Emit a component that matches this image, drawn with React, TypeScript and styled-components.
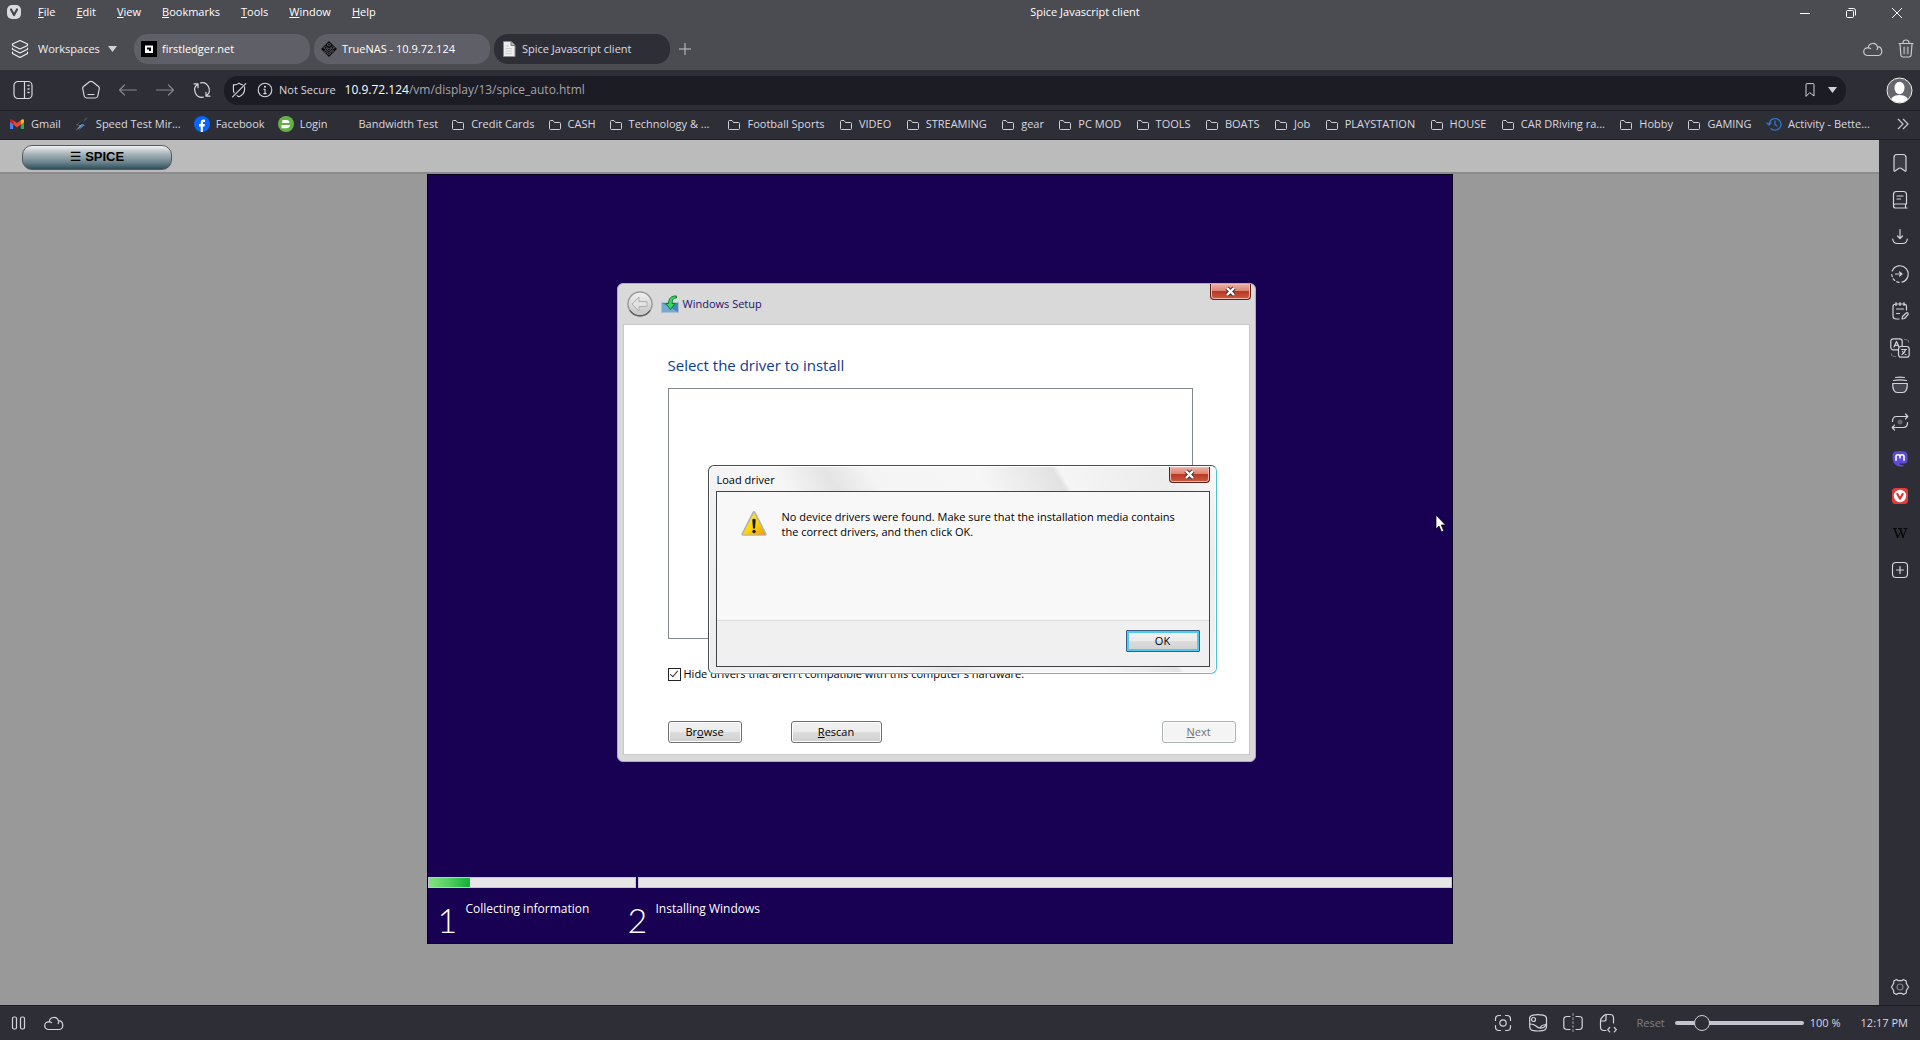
import React from 'react';
import styled, { createGlobalStyle, css } from 'styled-components';

const GlobalStyle = createGlobalStyle`
  *, *::before, *::after { box-sizing: border-box; }
  html, body { margin: 0; padding: 0; }
  body {
    background: #2e2e36;
    font-family: 'Open Sans', 'Noto Sans', sans-serif;
    font-size: 11px;
    line-height: 16px;
    color: #d8d8e0;
    overflow: hidden;
  }
  button, input { font: inherit; color: inherit; }
  button { padding: 0; border: 0; background: none; cursor: default; }
  a { color: inherit; text-decoration: none; }
  svg { display: block; flex: none; }
`;

/* ---------- window frame ---------- */

const Browser = styled.div`
  display: flex;
  flex-direction: column;
  height: 100vh;
`;

const TitleBar = styled.header`
  display: flex;
  align-items: center;
  height: 25px;
  flex: none;
  padding-bottom: 2px;
  background: #4b4b52;
  color: #fff;
`;

const AppButton = styled.button`
  display: flex;
  padding: 0 6px;
`;

const MenuBar = styled.nav`
  display: flex;
  gap: 21px;
  padding-left: 10px;
  width: 360px;
`;

const MenuItem = styled.button`
  &::first-letter { text-decoration: underline; }
`;

const WindowTitle = styled.div`
  flex: 1;
  text-align: center;
`;

const WindowControls = styled.div`
  display: flex;
`;

const WindowControl = styled.button`
  display: flex;
  align-items: center;
  justify-content: center;
  width: 46px;
  height: 23px;
  padding-top: 2px;
`;

const TabBar = styled.div`
  display: flex;
  align-items: center;
  height: 45px;
  flex: none;
  padding: 2px 0 0 10px;
  background: #4b4b52;
  color: #f0f0f4;
`;

const TabActions = styled.div`
  display: flex;
  gap: 4px;
`;

const Workspaces = styled.button`
  display: flex;
  align-items: center;
  gap: 8px;
  width: 124px;
  text-align: left;
`;

const Tabs = styled.div`
  display: flex;
  gap: 4px;
`;

const Tab = styled.button<{ $active?: boolean }>`
  display: flex;
  align-items: center;
  gap: 5px;
  width: 176px;
  height: 30px;
  padding-left: 7px;
  border-radius: 14px;
  text-align: left;
  background: ${(p) => (p.$active ? '#2e2e36' : '#5f5f67')};
  color: ${(p) => (p.$active ? '#dcdce4' : '#fff')};
`;

const PlainButton = styled.button`
  display: flex;
  align-items: center;
  justify-content: center;
  min-width: 29px;
  height: 28px;
  color: #c8c8d2;
`;

const Spacer = styled.div`
  flex: 1;
`;

/* ---------- address bar ---------- */

const AddressBar = styled.div`
  display: flex;
  align-items: center;
  height: 40px;
  flex: none;
  padding: 0 2px 0 4px;
  background: #2e2e36;
`;

const ToolButton = styled.button<{ $dim?: boolean; $apart?: boolean }>`
  display: flex;
  align-items: center;
  justify-content: center;
  width: 37px;
  height: 28px;
  margin-right: ${(p) => (p.$apart ? '31px' : '0')};
  color: ${(p) => (p.$dim ? '#85858e' : '#d8d8e0')};
`;

const AddressField = styled.div`
  display: flex;
  align-items: center;
  flex: 1;
  height: 29px;
  margin: 0 35px 0 4px;
  padding: 0 4px 0 2px;
  border-radius: 14px;
  background: #1c1c24;
`;

const FieldButton = styled.button`
  display: flex;
  align-items: center;
  gap: 6px;
  height: 24px;
  padding: 0 5px;
`;

const UrlText = styled.div`
  flex: 1;
  padding-left: 4px;
  font-size: 12px;
  color: #a4a4ac;
`;

const UrlHost = styled.span`
  color: #fff;
`;

/* ---------- bookmarks ---------- */

const BookmarkBar = styled.nav`
  display: flex;
  align-items: center;
  height: 30px;
  flex: none;
  padding: 0 3px 2px 9px;
  border-top: 1px solid #1e1e26;
  border-bottom: 1px solid #1e1e26;
  background: #2e2e36;
`;

const BookmarkList = styled.div<{ $fill?: boolean }>`
  display: flex;
  gap: 13px;
  margin-right: 18px;
  ${(p) =>
    p.$fill &&
    css`
      flex: 1;
      justify-content: space-between;
      gap: 0;
    `}
`;

const Bookmark = styled.a`
  display: flex;
  align-items: center;
  gap: 6px;
  white-space: nowrap;
`;

/* ---------- page area ---------- */

const Middle = styled.div`
  display: flex;
  flex: 1;
  min-height: 0;
`;

const Page = styled.main`
  display: flex;
  flex-direction: column;
  flex: 1;
  min-width: 0;
  background: #999;
`;

const SpiceToolbar = styled.div`
  display: flex;
  align-items: center;
  height: 34px;
  flex: none;
  padding-left: 22px;
  border-bottom: 2px solid #8c8c8c;
  background: #bbb;
`;

const SpiceButton = styled.button`
  width: 150px;
  height: 25px;
  margin-top: 2px;
  border: 1px solid #555a60;
  border-radius: 10px;
  background: linear-gradient(#eef1f3 0%, #a8b4b9 35%, #6d858e 70%, #2f4f5b 100%);
  font: bold 13px/22px 'Liberation Sans', 'DejaVu Sans', sans-serif;
  color: #000;
`;

const Screen = styled.section`
  position: relative;
  display: flex;
  flex-direction: column;
  justify-content: flex-end;
  width: 1026px;
  height: 770px;
  flex: none;
  align-self: center;
  border: 1px solid #08001c;
  background: #180052;
  color: #fff;
`;

const Progress = styled.div`
  display: grid;
  grid-template-columns: 208px 1fr;
  gap: 2px;
`;

const ProgressTrack = styled.div`
  height: 11px;
  border: 1px solid #c8c4d8;
  background: #e6e6e6;
`;

const ProgressFill = styled.div`
  width: 20%;
  height: 100%;
  background: linear-gradient(100deg, #7be07b 10%, #4fd060 50%, #1cb43c 90%);
`;

const Stages = styled.div`
  display: grid;
  grid-template-columns: 190px 1fr;
  height: 55px;
  padding: 13px 0 0 10px;
`;

const Stage = styled.div`
  display: flex;
  align-items: flex-start;
  gap: 10px;
`;

const StageNumber = styled.span`
  width: 18px;
  margin-top: 3px;
  font-family: Lato, 'Noto Sans', sans-serif;
  font-weight: 300;
  font-size: 34px;
  line-height: 32px;
`;

const StageName = styled.span`
  font-size: 12px;
`;

/* ---------- setup windows ---------- */

const SetupWindow = styled.section`
  position: absolute;
  left: 189px;
  top: 108px;
  display: flex;
  flex-direction: column;
  width: 639px;
  height: 479px;
  padding: 0 5px 6px;
  border: 1px solid #b0acc0;
  border-radius: 6px;
  background: #d9d9d9;
  color: #000;
`;

const SetupHeader = styled.div`
  display: flex;
  align-items: center;
  gap: 8px;
  height: 40px;
  flex: none;
  margin-right: -1px;
  padding-left: 4px;
  color: #1a1468;
`;

const SetupTitle = styled.div`
  display: flex;
  align-items: center;
  gap: 4px;
  flex: 1;
`;

const CloseButton = styled.button`
  display: flex;
  align-items: center;
  justify-content: center;
  align-self: flex-start;
  width: 41px;
  height: 16px;
  border: 1px solid #5c2018;
  border-top: 0;
  border-radius: 0 0 4px 4px;
  background: linear-gradient(#eeb0a4 0%, #dc8474 45%, #bc3820 50%, #c85c44 100%);
  box-shadow: inset 0 0 0 1px #f0b8ac;
`;

const SetupBody = styled.div`
  display: flex;
  flex-direction: column;
  flex: 1;
  padding: 29px 13px 11px 44px;
  border: 1px solid #c8c8c8;
  background: #fff;
`;

const SetupHeading = styled.h1`
  margin: 0;
  font-size: 15px;
  line-height: 22px;
  font-weight: 400;
  color: #103c90;
`;

const DriverList = styled.div`
  height: 251px;
  margin: 12px 43px 0 0;
  border: 1px solid #828790;
`;

const CompatLabel = styled.label`
  display: flex;
  align-items: center;
  gap: 3px;
  margin-top: 27px;
`;

const CheckBox = styled.input`
  appearance: none;
  width: 13px;
  height: 13px;
  margin: 0;
  border: 1px solid #222;
  background: #fff;
  position: relative;
  &:checked::after {
    content: '';
    position: absolute;
    left: 3px;
    top: 0;
    width: 4px;
    height: 8px;
    border: solid #333;
    border-width: 0 1px 1px 0;
    transform: rotate(40deg);
  }
`;

const SetupActions = styled.div`
  display: flex;
  margin-top: auto;
`;

const DialogButton = styled.button<{ $wide?: boolean; $focus?: boolean }>`
  width: ${(p) => (p.$wide ? '91px' : '74px')};
  height: 22px;
  border: 1px solid #707070;
  border-radius: 3px;
  background: linear-gradient(#f2f2f2 0%, #ebebeb 49%, #dddddd 51%, #cfcfcf 100%);
  box-shadow: inset 0 0 0 1px #fcfcfc;
  color: #000;
  line-height: 18px;
  &:disabled {
    border-color: #adb2b5;
    background: #f4f4f4;
    color: #6f6f6f;
  }
  ${(p) =>
    p.$focus &&
    css`
      border-color: #3c6080;
      border-radius: 1px;
      box-shadow: inset 0 0 0 2px #50c8f0;
    `}
`;

const ActionGap = styled.div`
  width: 49px;
`;

const LoadDialog = styled.section`
  position: absolute;
  left: 280px;
  top: 290px;
  display: flex;
  flex-direction: column;
  width: 509px;
  height: 209px;
  padding: 0 6px 6px 7px;
  border: 1px solid;
  border-color: #484c50 #4cc4d0 #4cc4d0 #484c50;
  border-radius: 6px;
  background: linear-gradient(58deg, #ececec 0%, #f6f6f6 30%, #e4e4e4 38%, #f4f4f4 45%, #f6f6f6 62%, #e2e2e2 74%, #f5f5f5 75%, #ececec 90%, #f8f8f8 100%);
  box-shadow: inset 0 0 0 1px #fff;
  color: #000;
`;

const LoadHeader = styled.div`
  display: flex;
  justify-content: space-between;
  height: 25px;
  flex: none;
  padding-top: 1px;
`;

const LoadTitle = styled.h2`
  margin: 0;
  padding: 5px 0 0 1px;
  font-size: 11px;
  line-height: 16px;
  font-weight: 400;
`;

const LoadBody = styled.div`
  display: flex;
  flex-direction: column;
  flex: 1;
  border: 1px solid #404448;
  background: #f8f8f8;
`;

const Message = styled.div`
  display: flex;
  gap: 14px;
  flex: 1;
  padding: 17px 20px 0 23px;
  line-height: 15px;
`;

const MessageText = styled.p`
  margin: 0;
`;

const LoadFooter = styled.div`
  display: flex;
  justify-content: flex-end;
  height: 46px;
  flex: none;
  padding: 9px 9px 0 0;
  border-top: 1px solid #dcdcdc;
  background: #f0f0f0;
`;

const Pointer = styled.svg`
  position: absolute;
  left: 1007px;
  top: 339px;
`;

/* ---------- side panel and status bar ---------- */

const SidePanel = styled.aside`
  display: flex;
  flex-direction: column;
  align-items: center;
  width: 41px;
  flex: none;
  padding-top: 4px;
  background: #2e2e36;
`;

const PanelButton = styled.button`
  display: flex;
  align-items: center;
  justify-content: center;
  width: 37px;
  height: 37px;
  color: #d4d4de;
`;

const StatusBar = styled.footer`
  display: flex;
  align-items: center;
  height: 35px;
  flex: none;
  padding: 0 12px 0 1px;
  border-top: 1px solid #1c1c22;
  background: #2e2e36;
`;

const StatusButton = styled.button`
  display: flex;
  align-items: center;
  justify-content: center;
  width: 35px;
  height: 28px;
  color: #d4d4de;
`;

const ResetButton = styled.button`
  margin: 0 10px 0 11px;
  color: #7e7e88;
`;

const ZoomSlider = styled.input`
  appearance: none;
  width: 129px;
  height: 16px;
  margin: 0 6px 0 0;
  background: transparent;
  &::-webkit-slider-runnable-track {
    height: 4px;
    border-radius: 2px;
    background: #c4c4d0;
  }
  &::-webkit-slider-thumb {
    appearance: none;
    width: 16px;
    height: 16px;
    margin-top: -6px;
    border: 1px solid #d0d0dc;
    border-radius: 50%;
    background: #2e2e36;
  }
`;

const Clock = styled.time`
  margin-left: 20px;
`;

/* ---------- drawings ---------- */

type DrawingProps = { size?: number; children: React.ReactNode; width?: number };

const Drawing = ({ size = 20, width = 1.2, children }: DrawingProps) => (
  <svg
    width={size}
    height={size}
    viewBox="0 0 20 20"
    fill="none"
    stroke="currentColor"
    strokeWidth={width}
    strokeLinecap="round"
    strokeLinejoin="round"
    aria-hidden="true"
  >
    {children}
  </svg>
);

const CloudIcon = () => (
  <Drawing>
    <path d="M4.500 16.500a3.800 3.800 0 0 1 0-7.600h.8a4.600 4.600 0 0 1 9-1.200a4.500 4.500 0 0 1 1.300 8.800z M14.500 7.700q.6 1.500-.4 2.900M5.300 8.900q1.500 0 2.300 .8" />
  </Drawing>
);

const FolderIcon = () => (
  <svg width="14" height="14" viewBox="0 0 14 14" fill="none" stroke="#d0d0da" strokeWidth="1" aria-hidden="true">
    <path d="M1.500 4.500q0-1 1-1h2.500l1.500 2h5q1 0 1 1v5q0 1-1 1h-9q-1 0-1-1z" />
  </svg>
);

const GmailIcon = () => (
  <svg width="16" height="16" viewBox="0 0 16 16" aria-hidden="true">
    <path d="M1 4.500v8.500h3.200V7z" fill="#4285f4" />
    <path d="M15 4.500v8.500h-3.200V7z" fill="#34a853" />
    <path d="M4.200 4.200v4.300L8 11.400l3.800-2.900V4.200L8 7z" fill="#ea4335" />
    <path d="M1 4.500v1.700l3.200 2.400V4.200C2.800 2.600 1 3 1 4.500z" fill="#c5221f" />
    <path d="M15 4.500v1.700l-3.200 2.400V4.200C13.200 2.600 15 3 15 4.500z" fill="#fbbc04" />
  </svg>
);

const SpeedIcon = () => (
  <svg width="16" height="16" viewBox="0 0 16 16" aria-hidden="true">
    <path d="M14 1L2 9l4 .5L1.500 15 10 8.800 6.500 8z" fill="#8a9aa8" />
    <path d="M13.500 2L8.500 8l2.500 1-6 5 2.500-5z" fill="#3f80c4" />
    <path d="M12 2L3 8.700l3.500 .3z" fill="#1c2630" />
  </svg>
);

const FacebookIcon = () => (
  <svg width="16" height="16" viewBox="0 0 16 16" aria-hidden="true">
    <circle cx="8" cy="8" r="8" fill="#0866ff" />
    <path d="M6.700 16V10.500H5V8.100h1.700V6.800c0-2.200 1-3.200 3-3.200.5 0 1 .1 1.300.2v2.100h-.9c-.9 0-1.200.4-1.200 1.200v1h2l-.4 2.400H8.900V16z" fill="#fff" />
  </svg>
);

const LoginIcon = () => (
  <svg width="16" height="16" viewBox="0 0 16 16" aria-hidden="true">
    <circle cx="8" cy="8" r="8" fill="#66b045" />
    <path d="M4.500 4h4q3 0 3 3h-7.500zM3.500 9h8.500q-.5 3.200-3.500 3.200h-5z" fill="#fff" />
  </svg>
);

const HistoryIcon = () => (
  <svg width="16" height="16" viewBox="0 0 16 16" fill="none" stroke="#2f74c8" strokeWidth="1.300" strokeLinecap="round" aria-hidden="true">
    <path d="M3 8.500a6 5.800 0 1 1 2 4.200M.8 7l2.200 2 2-2.200M9 5v3.600l2 1.400" />
  </svg>
);

const BlankIcon = () => <svg width="12" height="16" aria-hidden="true" />;

const CaretIcon = () => (
  <svg width="9" height="6" viewBox="0 0 9 6" fill="#d0d0da" aria-hidden="true">
    <path d="M0 0h9L4.500 6z" />
  </svg>
);

const CrossMark = () => (
  <svg width="13" height="11" viewBox="0 0 13 11" aria-hidden="true">
    <path d="M3 2l7 7M10 2l-7 7" stroke="#4a3434" strokeWidth="4.400" />
    <path d="M3 2l7 7M10 2l-7 7" stroke="#fff" strokeWidth="2.400" />
  </svg>
);

const WarningIcon = () => (
  <svg width="28" height="28" viewBox="0 0 28 28" aria-hidden="true">
    <defs>
      <linearGradient id="warn" x1="0" y1="0" x2="1" y2="1">
        <stop offset="0" stopColor="#fff04a" />
        <stop offset="0.550" stopColor="#ffd400" />
        <stop offset="1" stopColor="#ee9a00" />
      </linearGradient>
    </defs>
    <path d="M14 2q1 0 1.600 1.200l11 21.500q.7 2-1.300 2H2.700q-2 0-1.300-2l11-21.500Q13 2 14 2z" fill="#b4b4b4" />
    <path d="M14 4l11.200 21.500H2.800z" fill="url(#warn)" />
    <path d="M12.300 10.500q1.700-1.600 3.400 0l-.7 9h-2z" fill="#141414" />
    <circle cx="14" cy="22.500" r="1.700" fill="#141414" />
  </svg>
);

const BackCircle = () => (
  <svg width="26" height="26" viewBox="0 0 26 26" aria-hidden="true">
    <defs>
      <linearGradient id="back" x1="0" y1="0" x2="0" y2="1">
        <stop offset="0" stopColor="#f0f0f0" />
        <stop offset="1" stopColor="#c4c4c4" />
      </linearGradient>
    </defs>
    <circle cx="13" cy="13" r="12" fill="url(#back)" stroke="#9a9a9a" strokeWidth="1.500" />
    <path d="M3 19.500A12 12 0 0 0 23 19.500" fill="none" stroke="#555" strokeWidth="1.300" />
    <path d="M5 13l7-7v4.500h8v5H12V20z" fill="#e2e2e2" stroke="#b0b0b0" />
  </svg>
);

const SetupIcon = () => (
  <svg width="18" height="18" viewBox="0 0 18 18" aria-hidden="true">
    <path d="M.5 7.500h17v10H.5z" fill="#4d84b8" stroke="#a8c0d4" />
    <path d="M1 8l16 9H1z" fill="#76a8d4" />
    <path d="M15.500 1C10 .5 7.500 4 7.500 8.500H5l4.500 6 4.500-6h-2.800C11 5 12 3 15.500 3z" fill="#3bd860" stroke="#0d7a30" />
  </svg>
);

const Glyph = {
  vivaldi: (
    <svg width="16" height="16" viewBox="0 0 16 16" aria-hidden="true">
      <rect x="1" y="1" width="14" height="14" rx="5" fill="#dadade" />
      <path d="M5 5.500l3 5.500 3-5.500" fill="none" stroke="#45454c" strokeWidth="2.200" strokeLinecap="round" strokeLinejoin="round" />
    </svg>
  ),
  layers: (
    <Drawing>
      <path d="M10 1.500l7.500 3.500v1.500L10 10 2.500 6.500V5zM2.500 9v1.300L10 14l7.500-3.700V9M2.500 13v1.500L10 18.500l7.500-4V13" />
    </Drawing>
  ),
  ledger: (
    <svg width="16" height="16" viewBox="0 0 16 16" aria-hidden="true">
      <path d="M0 0h16v16H0z" fill="#000" />
      <path d="M4 4.500h8v7.500H4z" fill="#fff" />
      <path d="M6 6.500h4v3.500H6z" fill="#000" />
      <path d="M6 8.500h2v1.500H6z" fill="#fff" />
    </svg>
  ),
  nas: (
    <svg width="16" height="16" viewBox="0 0 16 16" aria-hidden="true">
      <path d="M8 0l8 8-8 8-8-8z" fill="#0c0c0e" />
      <path d="M8 2.500l2 1.300-2 1.300-2-1.300zM4.500 5.500l2 1.300-2 1.300-2-1.300zM11.500 5.500l2 1.300-2 1.300-2-1.300zM8 7l2 1.300-2 1.300-2-1.300zM4.500 9l2 1.300-2 1.300-1-1zM11.500 9l1 1-1 1.300-2-1zM8 11l2 1.300-2 1.300-2-1.300z" fill="none" stroke="#66666e" strokeWidth=".7" />
    </svg>
  ),
  page: (
    <svg width="16" height="16" viewBox="0 0 16 16" aria-hidden="true">
      <path d="M2.500 .5h7.500l4 4v11h-11.500z" fill="#eee" stroke="#8c8c8c" />
      <path d="M10 .5v4h4" fill="#bbb" stroke="#777" />
      <path d="M4.500 5h3M4.500 7.500h6.500M4.500 10h6.500M4.500 12.500h6.500" stroke="#ccc" />
    </svg>
  ),
};

/* ---------- data ---------- */

const menus = ['File', 'Edit', 'View', 'Bookmarks', 'Tools', 'Window', 'Help'];

type BookmarkEntry = { name: string; icon?: React.ReactNode };

const pinned: BookmarkEntry[] = [
  { name: 'Gmail', icon: <GmailIcon /> },
  { name: 'Speed Test Mir...', icon: <SpeedIcon /> },
  { name: 'Facebook', icon: <FacebookIcon /> },
  { name: 'Login', icon: <LoginIcon /> },
  { name: 'Bandwidth Test', icon: <BlankIcon /> },
  { name: 'Credit Cards' },
  { name: 'CASH' },
  { name: 'Technology & ...' },
];

const folders: BookmarkEntry[] = [
  { name: 'Football Sports' },
  { name: 'VIDEO' },
  { name: 'STREAMING' },
  { name: 'gear' },
  { name: 'PC MOD' },
  { name: 'TOOLS' },
  { name: 'BOATS' },
  { name: 'Job' },
  { name: 'PLAYSTATION' },
  { name: 'HOUSE' },
  { name: 'CAR DRiving ra...' },
  { name: 'Hobby' },
  { name: 'GAMING' },
  { name: 'Activity - Bette...', icon: <HistoryIcon /> },
];

const panels: { name: string; icon: React.ReactNode }[] = [
  { name: 'Bookmarks', icon: <Drawing><path d="M4 17.500V4.500q0-3 3-3h6q3 0 3 3v13q0 1-1 .4l-4-2.600q-1-.6-2 0l-4 2.600q-1 .6-1-.4z" fill="#3c3c46" /></Drawing> },
  { name: 'Reading List', icon: <Drawing><path d="M3.500 16V4.500q0-3 3-3h7q3 0 3 3v9.500H5.500a2 2 0 0 0 0 4h11.500M15.500 14v4M7 6h6M7 9h3.500" /></Drawing> },
  { name: 'Downloads', icon: <Drawing><path d="M10 2.500v9M7.500 9l2.500 2.700 2.500-2.700M2.700 12q.6 4.500 4.500 4.500h5.600q3.900 0 4.500-4.500" /></Drawing> },
  { name: 'History', icon: <Drawing><path d="M2.200 7A8.300 8.300 0 1 1 12 18.100" /><path d="M1.800 10.500a8.300 8.300 0 0 0 8.200 7.900" strokeDasharray="2.200 2.400" /><path d="M5.500 10h6M9.500 8l2.500 2-2.500 2" /></Drawing> },
  { name: 'Notes', icon: <Drawing><path d="M9 18H6.500q-3.500 0-3.500-3V5.500q0-2.500 3-2.500h7.500q3 0 3 2.500V9M6 1.500v3M10 1.500v3M14 1.500v3M6.500 8h7M6.500 12.500h3M12.500 15.500l4-3.700q1.700-.5 1.700 1.500l-3.700 4.200-2.500.5z" /></Drawing> },
  { name: 'Translate', icon: <Drawing><rect x=".8" y=".8" width="11.400" height="11" rx="2.500" /><rect x="8.500" y="8.500" width="10.700" height="10.700" rx="2.500" fill="#2e2e36" /><path d="M4 9l2.500-5.500L9 9M5 7.300h3M11.500 11.500h5M15.500 11.500q-1 3.500-3.500 5M12.500 13.500q1.500 2.500 3.500 3" /><path d="M14.500 1.500h1.500q2.500 0 2.500 2.500v1.500M5.500 18.500H4q-2.500 0-2.500-2.500v-1.500" stroke="#70707a" strokeDasharray="2 1.500" /></Drawing> },
  { name: 'Sessions', icon: <Drawing><path d="M2.700 8.500h14.600q.2 9-4.800 9h-5q-5 0-4.800-9zM3.500 5.500q6.500-1.200 13 0M5.500 2.500q4.500-.8 9 0" fill="#44444e" /></Drawing> },
  { name: 'Feeds', icon: <Drawing><circle cx="10" cy="10" r="2.500" fill="#66666f" stroke="none" /><path d="M2.500 9.500q0-5 4-5h11M15.500 2l2.300 2.500-2.300 2.300M17.500 10.500q0 5-4 5h-11M4.500 13.200l-2.300 2.300L4.500 18" /></Drawing> },
  {
    name: 'Mastodon',
    icon: (
      <svg width="16" height="16" viewBox="0 0 16 16" aria-hidden="true">
        <path d="M3.500 .5q4.500-.8 9 0 3 .8 3 4v4q0 4-3.500 4H7q1 2 4.500 1.300v1.500q-4 1.200-7.500-1Q.5 12 .5 5q0-4 3-4.500z" fill="#5b4bd8" />
        <path d="M4 9.700V5.500q0-1.800 2-1.800t2 1.800v2M8 5.500q0-1.800 2-1.800t2 1.800v4.200" fill="none" stroke="#fff" strokeWidth="1.600" />
      </svg>
    ),
  },
  {
    name: 'Vivaldi',
    icon: (
      <svg width="16" height="16" viewBox="0 0 16 16" aria-hidden="true">
        <rect width="16" height="16" rx="3.500" fill="#e23c3c" />
        <circle cx="8" cy="8" r="6.200" fill="#fff" />
        <path d="M5.300 6l2.700 4.700 2.700-4.700" fill="none" stroke="#d83a3a" strokeWidth="2.200" strokeLinecap="round" strokeLinejoin="round" />
      </svg>
    ),
  },
  {
    name: 'Wikipedia',
    icon: (
      <svg width="16" height="16" viewBox="0 0 16 16" fill="none" stroke="#08080a" aria-hidden="true">
        <path d="M1 3.500h4M6 3.500h4M11.500 3.500h4M14.300 3.700L10.800 12.500M8.500 7.500L5.500 12.700" />
        <path d="M2.500 3.700l3.500 9M8 3.700l3.500 9" strokeWidth="1.700" />
      </svg>
    ),
  },
  { name: 'Add Web Panel', icon: <Drawing><rect x="2.500" y="2.500" width="15" height="15" rx="3.500" /><path d="M10 6.500v7M6.500 10h7" /></Drawing> },
];

const pageTools: { name: string; icon: React.ReactNode }[] = [
  { name: 'Capture Page', icon: <Drawing><circle cx="10" cy="10" r="3.200" /><path d="M2.500 7.500V6q0-3.500 3.500-3.500h1.500M12.500 2.500H14q3.500 0 3.500 3.500v1.500M17.500 12.500V14q0 3.500-3.500 3.500h-1.500M7.500 17.500H6q-3.500 0-3.500-3.500v-1.500" /></Drawing> },
  { name: 'Toggle Images', icon: <Drawing><path d="M1.700 6.500Q1 3 5 2.200q5-1 10 0 4 .8 3.500 4.500v6.500q0 4-4 4.500-4.500.6-9 0-3.800-.5-3.800-4.500z" /><circle cx="5.500" cy="6.500" r="2" /><path d="M2 11q4 0 6 2t5 2.200q4-.2 5-4M12 15q1-3 6-3.500" /></Drawing> },
  { name: 'Page Tiling', icon: <Drawing><path d="M7 3.500H4q-3.200 0-3.200 3v7q0 3 3.200 3h3M13 3.500h3q3.200 0 3.200 3v7q0 3-3.200 3h-3" /><path d="M10 .5v19" stroke="#8a8a94" strokeDasharray="2 2" /></Drawing> },
  { name: 'Page Actions', icon: <Drawing><path d="M8 17.500H6q-3.500 0-3.500-3.500V8q0-2 1.500-3.500L6 2.500q1-1 2.500-1h3.500q3.500 0 3.500 3.500v5M2.700 8H6q2 0 2-2V1.700M11.700 14.500l-2 2.200 2 2.200M16.300 14.500l2 2.200-2 2.200" /></Drawing> },
];

const Close = ({ label }: { label: string }) => (
  <CloseButton aria-label={label}>
    <CrossMark />
  </CloseButton>
);

const BookmarkGroup = ({ entries, fill }: { entries: BookmarkEntry[]; fill?: boolean }) => (
  <BookmarkList $fill={fill}>
    {entries.map((b) => (
      <Bookmark key={b.name} href="#">
        {b.icon ?? <FolderIcon />}
        {b.name}
      </Bookmark>
    ))}
  </BookmarkList>
);

const BrowserTop = () => (
  <>
    <TitleBar>
      <AppButton aria-label="Vivaldi">{Glyph.vivaldi}</AppButton>
      <MenuBar>
        {menus.map((m) => (
          <MenuItem key={m}>{m}</MenuItem>
        ))}
      </MenuBar>
      <WindowTitle>Spice Javascript client</WindowTitle>
      <WindowControls>
        <WindowControl aria-label="Minimize">
          <svg width="12" height="12" stroke="#fff"><path d="M1 6.500h10" /></svg>
        </WindowControl>
        <WindowControl aria-label="Restore">
          <svg width="12" height="12" fill="none" stroke="#fff"><rect x="1.500" y="3.500" width="7" height="7" rx="1" /><path d="M3.500 1.500h5q2 0 2 2v5" /></svg>
        </WindowControl>
        <WindowControl aria-label="Close">
          <svg width="12" height="12" stroke="#fff"><path d="M1 1l10 10M11 1L1 11" /></svg>
        </WindowControl>
      </WindowControls>
    </TitleBar>
    <TabBar>
      <Workspaces>
        {Glyph.layers}
        Workspaces
        <CaretIcon />
      </Workspaces>
      <Tabs>
        <Tab>{Glyph.ledger}firstledger.net</Tab>
        <Tab>{Glyph.nas}TrueNAS - 10.9.72.124</Tab>
        <Tab $active>{Glyph.page}Spice Javascript client</Tab>
      </Tabs>
      <PlainButton aria-label="New tab">
        <svg width="12" height="12" stroke="currentColor"><path d="M6 0v12M0 6h12" /></svg>
      </PlainButton>
      <Spacer />
      <TabActions>
        <PlainButton aria-label="Synced tabs"><CloudIcon /></PlainButton>
        <PlainButton aria-label="Closed tabs">
          <Drawing>
            <path d="M3 4.500h14M7 4q0-3 3-3t3 3M4 5l.8 10.500q.2 2.500 2.200 2.500h6q2 0 2.200-2.500L16 5" />
            <path d="M8.200 8.500v6M11.800 8.500v6" strokeWidth="2" opacity=".6" />
          </Drawing>
        </PlainButton>
      </TabActions>
    </TabBar>
    <AddressBar>
      <ToolButton aria-label="Panel" $apart>
        <Drawing>
          <rect x="1" y="1.500" width="18" height="17" rx="4" />
          <path d="M11.500 1.500v17" />
          <path d="M15 5.500h1M15 9h1M15 12.500h1" strokeWidth="1.500" />
        </Drawing>
      </ToolButton>
      <ToolButton aria-label="Home">
        <Drawing><path d="M8.500 1.800q1.500-1 3 0l6 4.700q1 .8.800 2l-1.500 7.500q-.4 2-2.500 2H5.700q-2.100 0-2.500-2L1.700 8.500q-.2-1.200.8-2zM7 14.500h6" /></Drawing>
      </ToolButton>
      <ToolButton aria-label="Back" $dim>
        <Drawing><path d="M1.500 10h17M6.500 5l-5 5 5 5" /></Drawing>
      </ToolButton>
      <ToolButton aria-label="Forward" $dim>
        <Drawing><path d="M1.500 10h17M13.500 5l5 5-5 5" /></Drawing>
      </ToolButton>
      <ToolButton aria-label="Reload">
        <Drawing>
          <path d="M8.700 2.800A7.300 7.300 0 0 1 14.500 15.700M14 12.300v3.900h4M11.300 17.200A7.300 7.300 0 0 1 5.500 4.300M6 7.700V3.800H2" />
        </Drawing>
      </ToolButton>
      <AddressField>
        <FieldButton aria-label="Content blocker">
          <Drawing size={16} width={1.4}>
            <path d="M17 6v3q0 6-7 9.500-1.500-.7-2.500-1.500M3.800 13.500Q3 11.500 3 9V3.500q4.500.5 7-2 2 2 4.500 2M18.500 2L2 18.500" />
          </Drawing>
        </FieldButton>
        <FieldButton>
          <Drawing size={16} width={1.4}>
            <circle cx="10" cy="10" r="8.500" />
            <path d="M10 9v5.500M8.500 9H10M8.500 14.500h3" />
            <circle cx="10" cy="6" r=".6" fill="currentColor" />
          </Drawing>
          Not Secure
        </FieldButton>
        <UrlText>
          <UrlHost>10.9.72.124</UrlHost>/vm/display/13/spice_auto.html
        </UrlText>
        <FieldButton aria-label="Bookmark page">
          <Drawing size={16}><path d="M5 17.500V3q0-1 1-1h8q1 0 1 1v14.500l-5-4z" /></Drawing>
        </FieldButton>
        <FieldButton aria-label="Show history"><CaretIcon /></FieldButton>
      </AddressField>
      <ToolButton aria-label="Profile">
        <svg width="27" height="27" viewBox="0 0 27 27">
          <defs><clipPath id="face"><circle cx="13.500" cy="13.500" r="12" /></clipPath></defs>
          <circle cx="13.500" cy="13.500" r="12.500" fill="#66666c" stroke="#f0f0f0" />
          <g clipPath="url(#face)" fill="#fff"><ellipse cx="13.500" cy="11" rx="5" ry="6.200" /><path d="M4 27q0-9 9.500-9t9.500 9z" /></g>
        </svg>
      </ToolButton>
    </AddressBar>
    <BookmarkBar>
      <BookmarkGroup entries={pinned} />
      <BookmarkGroup entries={folders} fill />
      <PlainButton aria-label="More bookmarks">
        <svg width="12" height="12" fill="none" stroke="currentColor" strokeWidth="1.200"><path d="M1 1l5 5-5 5M6 1l5 5-5 5" /></svg>
      </PlainButton>
    </BookmarkBar>
  </>
);

const Remote = () => (
  <Screen>
    <SetupWindow>
      <SetupHeader>
        <BackCircle />
        <SetupTitle>
          <SetupIcon />
          Windows Setup
        </SetupTitle>
        <Close label="Close Windows Setup" />
      </SetupHeader>
      <SetupBody>
        <SetupHeading>Select the driver to install</SetupHeading>
        <DriverList />
        <CompatLabel>
          <CheckBox type="checkbox" defaultChecked />
          Hide drivers that aren't compatible with this computer's hardware.
        </CompatLabel>
        <SetupActions>
          <DialogButton>Br<u>o</u>wse</DialogButton>
          <ActionGap />
          <DialogButton $wide><u>R</u>escan</DialogButton>
          <Spacer />
          <DialogButton disabled><u>N</u>ext</DialogButton>
        </SetupActions>
      </SetupBody>
    </SetupWindow>
    <LoadDialog role="alertdialog">
      <LoadHeader>
        <LoadTitle>Load driver</LoadTitle>
        <Close label="Close Load driver" />
      </LoadHeader>
      <LoadBody>
        <Message>
          <WarningIcon />
          <MessageText>
            No device drivers were found. Make sure that the installation media contains
            <br />
            the correct drivers, and then click OK.
          </MessageText>
        </Message>
        <LoadFooter>
          <DialogButton $focus>OK</DialogButton>
        </LoadFooter>
      </LoadBody>
    </LoadDialog>
    <Progress>
      <ProgressTrack><ProgressFill /></ProgressTrack>
      <ProgressTrack />
    </Progress>
    <Stages>
      <Stage><StageNumber>1</StageNumber><StageName>Collecting information</StageName></Stage>
      <Stage><StageNumber>2</StageNumber><StageName>Installing Windows</StageName></Stage>
    </Stages>
    <Pointer width="12" height="20" viewBox="0 0 12 20" aria-hidden="true">
      <path d="M1 1v14l3-3 2.500 6 2.300-1L6.300 11H10.500z" fill="#fff" stroke="#000" strokeWidth=".7" />
    </Pointer>
  </Screen>
);

export default function App() {
  return (
    <Browser>
      <GlobalStyle />
      <BrowserTop />
      <Middle>
        <Page>
          <SpiceToolbar>
            <SpiceButton>☰ SPICE</SpiceButton>
          </SpiceToolbar>
          <Remote />
        </Page>
        <SidePanel>
          {panels.map((p) => (
            <PanelButton key={p.name} aria-label={p.name}>{p.icon}</PanelButton>
          ))}
          <Spacer />
          <PanelButton aria-label="Settings">
            <Drawing>
              <path d="M6.500 2.500l1.800 1.200h3.400l1.800-1.200 2.700 1.500.2 2.500L18.500 10l-2.100 3.500-.2 2.500-2.700 1.500-1.800-1.200H8.300l-1.800 1.200L3.800 16l-.2-2.500L1.500 10l2.100-3.500L3.800 4z" />
              <circle cx="10" cy="10" r="3" stroke="#80808a" />
            </Drawing>
          </PanelButton>
        </SidePanel>
      </Middle>
      <StatusBar>
        <StatusButton aria-label="Break mode">
          <Drawing><rect x="3.500" y="4" width="4" height="12" rx="1.500" /><rect x="11.500" y="4" width="4" height="12" rx="1.500" /></Drawing>
        </StatusButton>
        <StatusButton aria-label="Sync"><CloudIcon /></StatusButton>
        <Spacer />
        {pageTools.map((t) => (
          <StatusButton key={t.name} aria-label={t.name}>{t.icon}</StatusButton>
        ))}
        <ResetButton>Reset</ResetButton>
        <ZoomSlider type="range" min={20} max={500} defaultValue={100} aria-label="Page zoom" />
        <span>100 %</span>
        <Clock>12:17 PM</Clock>
      </StatusBar>
    </Browser>
  );
}
